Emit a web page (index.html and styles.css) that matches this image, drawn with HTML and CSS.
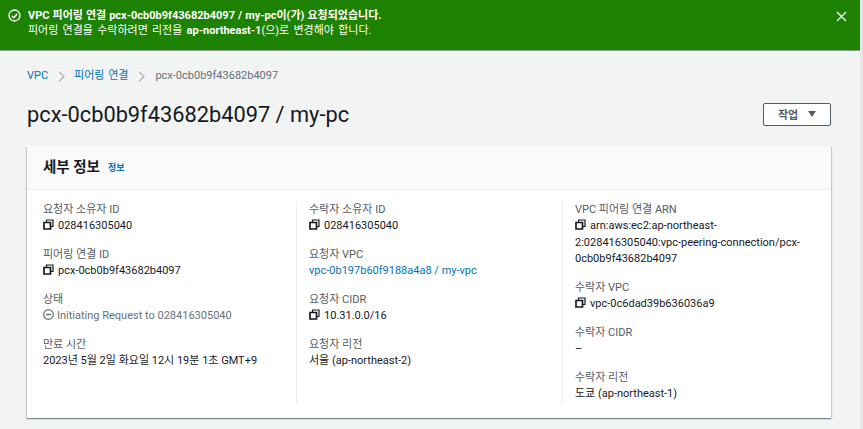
FILE: index.html
```html
<!DOCTYPE html>
<html lang="ko">
<head>
<meta charset="utf-8">
<title>pcx-0cb0b9f43682b4097 / my-pc</title>
<link rel="stylesheet" href="styles.css">
<svg width="0" height="0" class="defs" aria-hidden="true">
  <symbol id="copy" viewBox="0 0 11 11"><path d="M1 3.500h6.500v6.500h-6.500z" fill="none" stroke="#16191f" stroke-width="1.700"/><path d="M3.500 3v-2h6.500v6.500h-2" fill="none" stroke="#16191f" stroke-width="1.200"/></symbol>
</svg>
</head>
<body>
<div class="flash">
  <svg class="flash-icon" width="13" height="13" viewBox="0 0 13 13"><circle cx="6.500" cy="6.500" r="5.500" fill="none" stroke="#fff" stroke-width="1.300"/><path d="M3.800 6.700l2 2 3.500-4" fill="none" stroke="#fff" stroke-width="1.300"/></svg>
  <div class="flash-text">
    <div class="flash-title">VPC 피어링 연결 pcx-0cb0b9f43682b4097 / my-pc이(가) 요청되었습니다.</div>
    <div class="flash-sub">피어링 연결을 수락하려면 리전을 <b>ap-northeast-1</b>(으)로 변경해야 합니다.</div>
  </div>
  <svg class="flash-close" width="11" height="11" viewBox="0 0 11 11"><path d="M1 1l9 9M10 1l-9 9" fill="none" stroke="#e4ebe0" stroke-width="1.500"/></svg>
</div>
<main class="main">
  <nav class="crumbs">
    <a class="link">VPC</a>
    <svg class="chev" width="7" height="11" viewBox="0 0 7 11"><path d="M1 .8l5 4.700-5 4.700" fill="none" stroke="#aab7b8" stroke-width="1.300"/></svg>
    <a class="link">피어링 연결</a>
    <svg class="chev" width="7" height="11" viewBox="0 0 7 11"><path d="M1 .8l5 4.700-5 4.700" fill="none" stroke="#aab7b8" stroke-width="1.300"/></svg>
    <span class="crumb-current">pcx-0cb0b9f43682b4097</span>
  </nav>
  <div class="page-head">
    <h1>pcx-0cb0b9f43682b4097 / my-pc</h1>
    <button class="action">작업<i class="caret"></i></button>
  </div>
  <section class="card">
    <header class="card-head"><h2>세부 정보</h2><a class="link info">정보</a></header>
    <div class="grid">
      <div class="col">
        <div class="field"><div class="label">요청자 소유자 ID</div><div class="value"><svg class="copy"><use href="#copy"/></svg>028416305040</div></div>
        <div class="field"><div class="label">피어링 연결 ID</div><div class="value"><svg class="copy"><use href="#copy"/></svg>pcx-0cb0b9f43682b4097</div></div>
        <div class="field"><div class="label">상태</div><div class="value muted"><svg class="status" width="11" height="11" viewBox="0 0 11 11"><circle cx="5.500" cy="5.500" r="4.800" fill="none" stroke="#687078" stroke-width="1.200"/><path d="M3 5.500h5" stroke="#687078" stroke-width="1.500"/></svg>Initiating Request to 028416305040</div></div>
        <div class="field"><div class="label">만료 시간</div><div class="value">2023년 5월 2일 화요일 12시 19분 1초 GMT+9</div></div>
      </div>
      <div class="col">
        <div class="field"><div class="label">수락자 소유자 ID</div><div class="value"><svg class="copy"><use href="#copy"/></svg>028416305040</div></div>
        <div class="field"><div class="label">요청자 VPC</div><div class="value link">vpc-0b197b60f9188a4a8 / my-vpc</div></div>
        <div class="field"><div class="label">요청자 CIDR</div><div class="value"><svg class="copy"><use href="#copy"/></svg>10.31.0.0/16</div></div>
        <div class="field"><div class="label">요청자 리전</div><div class="value">서울 (ap-northeast-2)</div></div>
      </div>
      <div class="col">
        <div class="field"><div class="label">VPC 피어링 연결 ARN</div><div class="value"><svg class="copy"><use href="#copy"/></svg>arn:aws:ec2:ap-northeast-2:028416305040:vpc-peering-connection/pcx-0cb0b9f43682b4097</div></div>
        <div class="field"><div class="label">수락자 VPC</div><div class="value"><svg class="copy"><use href="#copy"/></svg>vpc-0c6dad39b636036a9</div></div>
        <div class="field"><div class="label">수락자 CIDR</div><div class="value">–</div></div>
        <div class="field"><div class="label">수락자 리전</div><div class="value">도쿄 (ap-northeast-1)</div></div>
      </div>
    </div>
  </section>
</main>
</body>
</html>
```
FILE: styles.css
```css
* { box-sizing: border-box; }
html, body { margin: 0; height: 100%; overflow: hidden; }
body {
  background: #f2f3f3;
  color: #16191f;
  font-family: Roboto, "Noto Sans CJK KR", sans-serif;
  font-size: 11px;
  line-height: 16.5px;
  border-right: 3px solid #e4e6e6;
}
.defs { position: absolute; }
.flash {
  height: 51px;
  background: #1d8102;
  border-bottom: 1px solid #8a9a8a;
  color: #fff;
  display: flex;
  align-items: flex-start;
  padding: 9px 0 0 8px;
}
.flash-icon { flex: none; }
.flash-text { margin-left: 7px; flex: 1; line-height: 15px; margin-top: -1px; }
.flash-title { font-weight: 700; word-spacing: .3px; }
.flash-sub { word-spacing: 1.500px; }
.flash-sub b { font-weight: 700; }
.flash-close { margin: 2px 13px 0 0; flex: none; }
.main { padding-left: 27px; width: 831px; }
.crumbs { display: flex; align-items: center; height: 17px; margin-top: 17px; }
.chev { margin: 0 9px 0 10px; }
.link { color: #0073bb; }
.crumbs .link { word-spacing: 1px; }
.crumb-current { color: #687078; margin-left: 1px; }
.page-head { display: flex; align-items: center; justify-content: space-between; margin-top: 13px; height: 32px; }
h1 { margin: 0; padding-top: 1px; font-weight: 400; font-size: 21.800px; line-height: 28px; }
.action {
  width: 68px; height: 23px;
  background: #fff; border: 1px solid #545b64; border-radius: 2px;
  color: #545b64; font: 700 11px Roboto, "Noto Sans CJK KR", sans-serif;
  display: flex; align-items: center; justify-content: center; gap: 10px; padding: 0;
}
.caret { width: 0; height: 0; border: 4px solid transparent; border-top: 6px solid #545b64; border-bottom: 0; }
.card {
  margin-top: 16px;
  background: #fff;
  height: 272px;
  box-shadow: 0 1px 1px rgba(0,28,36,.3), 1px 1px 1px rgba(0,28,36,.15), -1px 1px 1px rgba(0,28,36,.15);
}
.card-head {
  height: 44px;
  background: #fafafa;
  border-bottom: 1px solid #eaeded;
  display: flex; align-items: center; padding-left: 16px; gap: 8px;
}
h2 { margin: 0; font-size: 14.500px; font-weight: 700; line-height: 20px; }
.info { font-size: 9px; font-weight: 700; margin-top: 2px; }
.grid { display: grid; grid-template-columns: 253px 266px 266px; padding: 11px 0 0 16px; }
.col { height: 202px; padding-top: 1px; }
.col + .col { border-left: 1px solid #eaeded; padding-left: 12px; padding-right: 16px; }
.field { margin-bottom: 12.500px; }
.label { color: #545b64; line-height: 16px; }
.copy { width: 11px; height: 11px; margin-right: 4px; vertical-align: -1px; }
.status { margin-right: 3px; vertical-align: -1px; }
.muted { color: #687078; }
```
